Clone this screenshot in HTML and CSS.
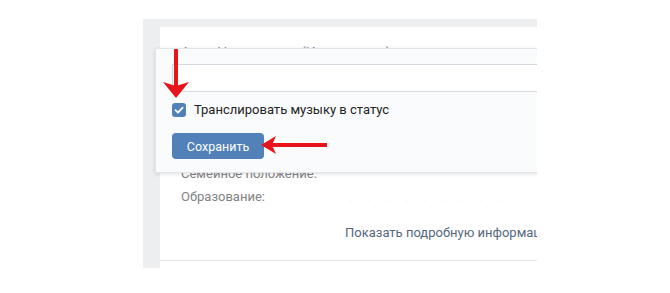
FILE: index.html
```html
<!DOCTYPE html>
<html lang="ru">
<head>
    <meta charset="UTF-8">
    <meta name="viewport" content="width=device-width, initial-scale=1.0">
    <title>Настройки статуса</title>
    <link rel="stylesheet" href="styles.css">
</head>
<body>
    <div class="frame">
        <div class="frame-top"></div>
        <div class="frame-body">
            <div class="side"></div>
            <div class="page">
                <div class="name">Анна Николаевна (Ивановская)</div>
                <div class="info">
                    <div class="info-row">Семейное положение:</div>
                    <div class="info-row">Образование: <span class="blur">. . . . . . . . .</span></div>
                </div>
                <div class="more">Показать подробную информацию</div>
            </div>
        </div>

        <div class="popup">
            <div class="status-input"></div>
            <label class="check-row">
                <span class="checkbox">
                    <svg width="14" height="14" viewBox="0 0 14 14">
                        <path d="M3.5 7.2 L6 9.6 L10.6 4.6" fill="none" stroke="#fff" stroke-width="1.8" stroke-linecap="round" stroke-linejoin="round"/>
                    </svg>
                </span>
                Транслировать музыку в статус
            </label>
            <button class="save-btn">Сохранить</button>
        </div>
    </div>

    <!-- red arrows over the screenshot -->
    <svg class="arrow arrow-down" width="30" height="52" viewBox="0 0 30 52">
        <rect x="12" y="0" width="4" height="38" fill="#e8141b"/>
        <path d="M14 49 L1 33 L14 37 L27 33 Z" fill="#e8141b"/>
    </svg>
    <svg class="arrow arrow-left" width="66" height="22" viewBox="0 0 66 22">
        <rect x="10" y="9" width="56" height="4" fill="#e8141b"/>
        <path d="M0 11 L15 2 L11 11 L15 20 Z" fill="#e8141b"/>
    </svg>
</body>
</html>
```

FILE: styles.css
```css
body {
    margin: 0;
    background-color: #fff;
    font-family: 'Roboto', 'Liberation Sans', sans-serif;
    font-size: 13px;
    position: relative;
    height: 293px;
    overflow: hidden;
}
.frame {
    position: relative;
    margin: 19px 0 0 143px;
    width: 394px;
    height: 249px;
    overflow: hidden;
    background-color: #fff;
}
.frame-top {
    height: 8px;
    background-color: #edeef0;
}
.frame-body {
    display: flex;
    height: 241px;
}
.side {
    width: 17px;
    flex: none;
    background-color: #edeef0;
}
.page {
    flex: 1;
    background-color: #fff;
    height: 233px;
    border-bottom: 1px solid #e4e6ea;
    padding: 0 0 0 21px;
}
.name {
    margin-top: 18px;
    font-size: 14px;
    color: #8a919b;
    line-height: 16px;
}
.info {
    margin-top: 101px;
}
.info-row {
    color: #828282;
    line-height: 23px;
}
.blur {
    color: #f2f3f5;
    margin-left: 80px;
    letter-spacing: 6px;
}
.more {
    margin: 17px 0 0 164px;
    color: #55677d;
    white-space: nowrap;
    line-height: 16px;
}
.popup {
    position: absolute;
    left: 12px;
    top: 29px;
    width: 420px;
    height: 125px;
    box-sizing: border-box;
    padding: 15px 0 0 16px;
    background-color: #fafbfc;
    border: 1px solid #e1e4e8;
    box-shadow: 0 1px 4px rgba(0,0,0,0.12);
}
.status-input {
    height: 26px;
    background-color: #fff;
    border: 1px solid #d3d9de;
    border-right: none;
}
.check-row {
    display: flex;
    align-items: center;
    margin-top: 10px;
    color: #222;
    line-height: 16px;
}
.checkbox {
    display: inline-block;
    width: 14px;
    height: 14px;
    margin-right: 8px;
    border-radius: 3px;
    background-color: #5181b8;
}
.checkbox svg {
    display: block;
}
.save-btn {
    margin-top: 15px;
    width: 92px;
    height: 26px;
    padding: 0;
    font-family: 'Roboto', 'Liberation Sans', sans-serif;
    font-size: 12.5px;
    color: #fff;
    background-color: #5181b8;
    border: none;
    border-radius: 4px;
}
.arrow {
    position: absolute;
}
.arrow-down {
    left: 162px;
    top: 49px;
}
.arrow-left {
    left: 261px;
    top: 134px;
}
```
